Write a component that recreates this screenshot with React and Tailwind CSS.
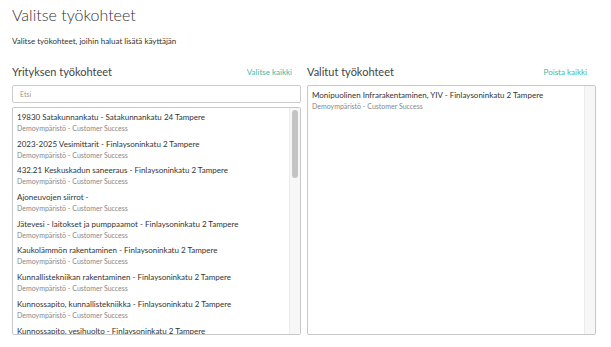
const font = { fontFamily: 'Lato, "Open Sans", sans-serif' }

const available = [
  '19830 Satakunnankatu - Satakunnankatu 24 Tampere',
  '2023-2025 Vesimittarit - Finlaysoninkatu 2 Tampere',
  '432.21 Keskuskadun saneeraus - Finlaysoninkatu 2 Tampere',
  'Ajoneuvojen siirrot -',
  'Jätevesi - laitokset ja pumppaamot - Finlaysoninkatu 2 Tampere',
  'Kaukolämmön rakentaminen - Finlaysoninkatu 2 Tampere',
  'Kunnallistekniikan rakentaminen - Finlaysoninkatu 2 Tampere',
  'Kunnossapito, kunnallistekniikka - Finlaysoninkatu 2 Tampere',
  'Kunnossapito, vesihuolto - Finlaysoninkatu 2 Tampere',
]

const selected = ['Monipuolinen Infrarakentaminen, YIV - Finlaysoninkatu 2 Tampere']

// One site row: name on top, organisation below
function SiteRow({ name }) {
  return (
    <div className="h-[26.7px] shrink-0">
      <div className="text-[8px] leading-[12px] text-[#333] whitespace-nowrap">{name}</div>
      <div className="text-[7px] leading-[11px] text-[#888] whitespace-nowrap">Demoympäristö - Customer Success</div>
    </div>
  )
}

// Fake scrollbar track, thumb optional
function Scrollbar({ thumb }) {
  return (
    <div className="w-[11px] shrink-0 bg-[#f7f7f7] border-l border-[#ececec] flex justify-center pt-[2px]">
      {thumb && <div className="w-[6px] h-[68px] rounded-full bg-[#c4c4c4]" />}
    </div>
  )
}

export default function App() {
  return (
    <div className="w-[611px] h-[347px] bg-white overflow-hidden pl-3" style={font}>
      <h1 className="text-[16px] leading-[20px] font-light text-[#333] pt-[5px]">Valitse työkohteet</h1>
      <p className="text-[8px] leading-[10px] text-[#333] mt-[11px]">Valitse työkohteet, joihin haluat lisätä käyttäjän</p>

      <div className="grid grid-cols-2 gap-[6px] w-[584px] mt-[19px]">
        {/* Company sites */}
        <div className="flex flex-col">
          <div className="flex items-center justify-between h-[14px] pr-[9px]">
            <span className="text-[11px] text-[#444]">Yrityksen työkohteet</span>
            <span className="text-[8px] text-[#3dbaa9]">Valitse kaikki</span>
          </div>
          <div className="mt-[6px] h-[18px] border border-[#ccc] rounded-[2px] flex items-center px-[7px] text-[7px] text-[#999]">Etsi</div>
          <div className="mt-[4px] h-[228px] border border-[#c8c8c8] rounded-[2px] flex overflow-hidden">
            <div className="flex-1 flex flex-col pl-[4px] pt-[3px] overflow-hidden">
              {available.map(n => <SiteRow key={n} name={n} />)}
            </div>
            <Scrollbar thumb />
          </div>
        </div>

        {/* Selected sites */}
        <div className="flex flex-col">
          <div className="flex items-center justify-between h-[14px] pr-[9px]">
            <span className="text-[11px] text-[#444]">Valitut työkohteet</span>
            <span className="text-[8px] text-[#3dbaa9]">Poista kaikki</span>
          </div>
          <div className="mt-[6px] h-[250px] border border-[#c8c8c8] rounded-[2px] flex overflow-hidden">
            <div className="flex-1 flex flex-col pl-[4px] pt-[3px] overflow-hidden">
              {selected.map(n => <SiteRow key={n} name={n} />)}
            </div>
            <Scrollbar />
          </div>
        </div>
      </div>
    </div>
  )
}
